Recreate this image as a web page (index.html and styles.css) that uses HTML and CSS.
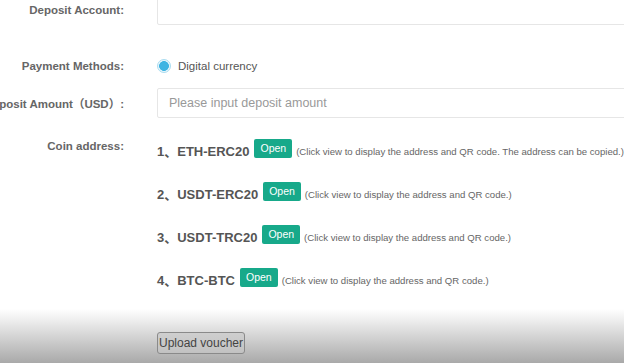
FILE: index.html
```html
<!DOCTYPE html>
<html>
<head>
  <title>Deposit</title>
  <link rel="stylesheet" href="styles.css">
</head>
<body>
  <form class="deposit-form" name="depositForm">
    <div class="form-row row-account">
      <label class="form-label">Deposit Account:</label>
      <div class="form-field">
        <input type="text" class="text-input" name="account">
      </div>
    </div>

    <div class="form-row row-method">
      <label class="form-label">Payment Methods:</label>
      <div class="form-field">
        <span class="radio-dot"></span>
        <span class="radio-text">Digital currency</span>
      </div>
    </div>

    <div class="form-row row-amount">
      <label class="form-label">Deposit Amount（USD）:</label>
      <div class="form-field">
        <input type="text" class="text-input" name="amount" placeholder="Please input deposit amount">
      </div>
    </div>

    <div class="form-row row-coins">
      <label class="form-label">Coin address:</label>
      <div class="coin-list">
        <div class="coin-item">
          <span class="coin-name">1、ETH-ERC20</span>
          <span class="open-btn">Open</span>
          <span class="coin-note">(Click view to display the address and QR code. The address can be copied.)</span>
        </div>
        <div class="coin-item">
          <span class="coin-name">2、USDT-ERC20</span>
          <span class="open-btn">Open</span>
          <span class="coin-note">(Click view to display the address and QR code.)</span>
        </div>
        <div class="coin-item">
          <span class="coin-name">3、USDT-TRC20</span>
          <span class="open-btn">Open</span>
          <span class="coin-note">(Click view to display the address and QR code.)</span>
        </div>
        <div class="coin-item">
          <span class="coin-name">4、BTC-BTC</span>
          <span class="open-btn">Open</span>
          <span class="coin-note">(Click view to display the address and QR code.)</span>
        </div>
      </div>
    </div>

    <div class="upload-bar">
      <button type="button" class="upload-btn">Upload voucher</button>
    </div>
  </form>
</body>
</html>
```

FILE: styles.css
```css
body {
  margin: 0;
  background-color: #fff;
  font-family: "Liberation Sans", Arial, "Noto Sans CJK SC", sans-serif;
  overflow: hidden;
}

.deposit-form {
  margin-top: -5px;
}

.form-row {
  display: flex;
  align-items: center;
}

.form-label {
  display: flex;
  justify-content: flex-end;
  flex: 0 0 124px;
  min-width: 0;
  white-space: nowrap;
  font-size: 11.5px;
  font-weight: bold;
  color: #666;
}

.form-field {
  display: flex;
  align-items: center;
  margin-left: 33px;
}

.text-input {
  width: 540px;
  height: 30px;
  padding: 0 11px;
  border: 1px solid #e6e6e6;
  border-radius: 2px;
  box-sizing: border-box;
  font-family: inherit;
  font-size: 12.5px;
  color: #333;
  outline: none;
}

.text-input::placeholder {
  color: #999;
}

.row-method {
  height: 30px;
  margin-top: 26px;
}

.row-amount {
  margin-top: 7px;
}

.radio-dot {
  width: 14px;
  height: 14px;
  border-radius: 50%;
  border: 1px solid #a9dcf0;
  box-sizing: border-box;
  background: radial-gradient(circle, #3fb4e2 0, #3fb4e2 4.6px, #e9f6fc 5.2px);
}

.radio-text {
  margin-left: 7px;
  font-size: 11.5px;
  color: #555;
}

.row-coins {
  align-items: flex-start;
  margin-top: 20px;
}

.row-coins .form-label {
  line-height: 16px;
}

.coin-list {
  margin-left: 33px;
  padding-top: 1px;
}

.coin-item {
  display: flex;
  align-items: center;
  height: 22px;
  margin-bottom: 21px;
  white-space: nowrap;
}

.coin-name {
  font-size: 13px;
  font-weight: bold;
  color: #555;
}

.open-btn {
  margin: -3px 4px 0 5px;
  padding: 0 6px;
  height: 19px;
  line-height: 19px;
  border-radius: 2px;
  background-color: #17a98a;
  color: #fff;
  font-size: 10.5px;
}

.coin-note {
  font-size: 9.6px;
  color: #666;
  margin-top: 2px;
}

.upload-bar {
  height: 54px;
  margin-top: -2px;
  padding-left: 157px;
  padding-top: 23px;
  box-sizing: border-box;
  background: linear-gradient(#fff 0, #f3f3f3 8px, #d6d6d6 26px, #a9a9a9 100%);
}

.upload-btn {
  height: 22px;
  width: 88px;
  padding: 0;
  border: 1px solid #8a8a8a;
  border-radius: 3px;
  background-color: rgba(200, 200, 200, 0.6);
  font-family: inherit;
  font-size: 12px;
  color: #444;
}
```
